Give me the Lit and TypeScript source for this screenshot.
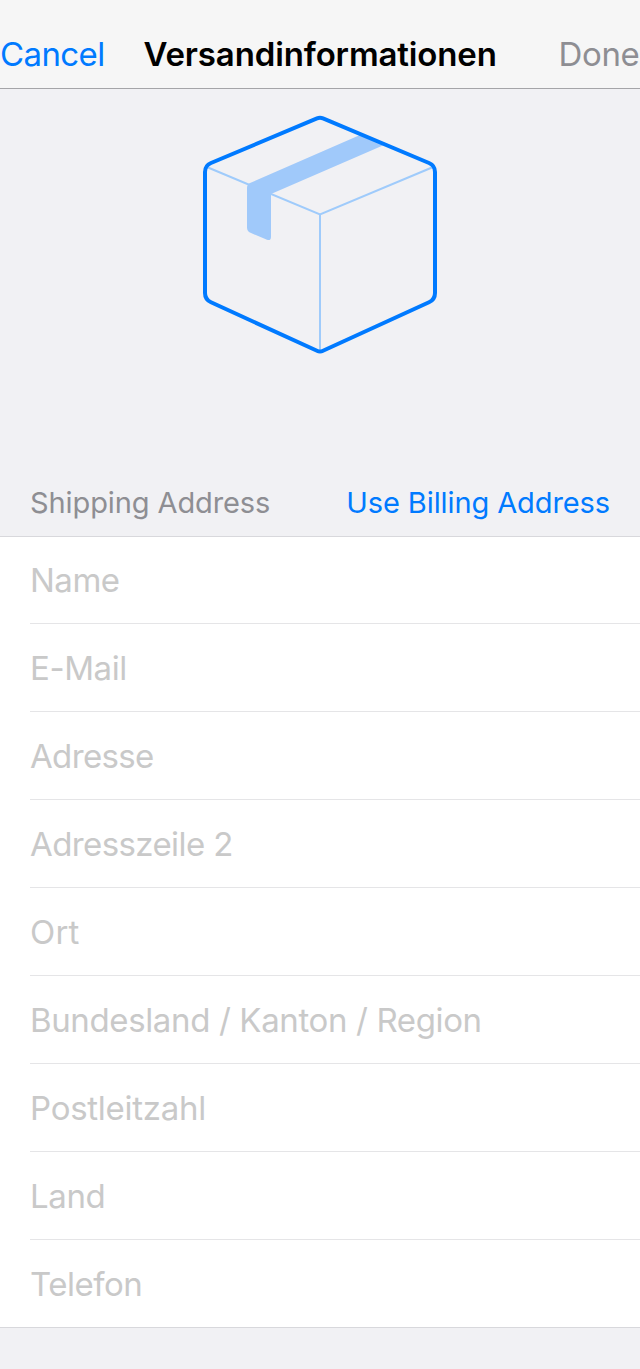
import { LitElement, html, css } from "lit";
import { customElement } from "lit/decorators.js";

@customElement("package-illustration")
class PackageIllustration extends LitElement {
  static styles = css`
    :host { display: block; width: 240px; height: 244px; }
    svg { display: block; }
    .edge { fill: none; stroke: #9fcbfb; stroke-width: 2; }
    .tape { fill: #a0c9fa; }
    .outline { fill: none; stroke: #007aff; stroke-width: 4; stroke-linejoin: round; }
  `;
  render() {
    return html`
      <svg width="240" height="244" viewBox="200 113 240 244" aria-hidden="true">
        <path class="edge" d="M208 167.500 L320 214.500 L432 167.500 M320 214.500 V351" />
        <path class="tape" d="M247 188 Q247 184.300 250 183 L360 135 L384 145 L271 194 V237 Q271 241 267 239.800 L250.500 232.800 Q247 231.300 247 227.500 Z" />
        <path class="outline" d="M317 118.400 Q320 117.200 323 118.400 L429 163 Q435 165.500 435 172 V293 Q435 299.500 429 302.300 L323 350.800 Q320 352.400 317 350.800 L211 302.300 Q205 299.500 205 293 V172 Q205 165.500 211 163 Z" />
      </svg>
    `;
  }
}

@customElement("app-root")
class AppRoot extends LitElement {
  static styles = css`
    :host {
      display: flex;
      flex-direction: column;
      box-sizing: border-box;
      width: 640px;
      height: 1369px;
      overflow: hidden;
      background: #f1f1f4;
      font-family: Inter, "Liberation Sans", sans-serif;
      font-size: 33px;
      white-space: nowrap;
    }
    .nav {
      display: grid;
      grid-template-columns: 143.5px 1fr auto;
      box-sizing: border-box;
      height: 89px;
      padding: 34px 0.5px 0 0;
      border-bottom: 1px solid #a5a5a8;
      background: #f6f6f6;
      line-height: 40px;
    }
    .cancel { color: #007aff; letter-spacing: -0.6px; }
    .title { font-weight: 600; color: #000; letter-spacing: -0.13px; }
    .done { color: #8e8e93; letter-spacing: -0.35px; }
    .hero { display: flex; justify-content: center; height: 363px; padding-top: 24px; }
    .section {
      display: flex;
      justify-content: space-between;
      box-sizing: border-box;
      height: 61px;
      padding: 8px 30px 0;
      border-bottom: 1px solid #d8d8dc;
      font-size: 29px;
      line-height: 38px;
      letter-spacing: -0.1px;
    }
    .label { color: #8e8e93; }
    .use { color: #007aff; }
    .fields { background: #fff; border-bottom: 1px solid #d8d8dc; height: 790px; }
    .field {
      box-sizing: border-box;
      height: 88px;
      margin-left: 30px;
      border-bottom: 1px solid #e5e5e7;
      line-height: 88px;
      color: #c9c9c9;
    }
    .field:first-child { height: 87px; line-height: 86px; }
    .field:last-child { border-bottom: 0; }
  `;

  private fields = [
    { label: "Name", tracking: -0.5 },
    { label: "E-Mail", tracking: -0.4 },
    { label: "Adresse", tracking: -0.65 },
    { label: "Adresszeile 2", tracking: -0.6 },
    { label: "Ort", tracking: 0.2 },
    { label: "Bundesland / Kanton / Region", tracking: -0.37 },
    { label: "Postleitzahl", tracking: -0.27 },
    { label: "Land", tracking: -0.4 },
    { label: "Telefon", tracking: -0.5 },
  ];

  render() {
    return html`
      <header class="nav">
        <span class="cancel">Cancel</span>
        <span class="title">Versandinformationen</span>
        <span class="done">Done</span>
      </header>
      <div class="hero"><package-illustration></package-illustration></div>
      <div class="section">
        <span class="label">Shipping Address</span>
        <span class="use">Use Billing Address</span>
      </div>
      <div class="fields">
        ${this.fields.map(
          (f) => html`<div class="field" style="letter-spacing:${f.tracking}px">${f.label}</div>`
        )}
      </div>
    `;
  }
}
